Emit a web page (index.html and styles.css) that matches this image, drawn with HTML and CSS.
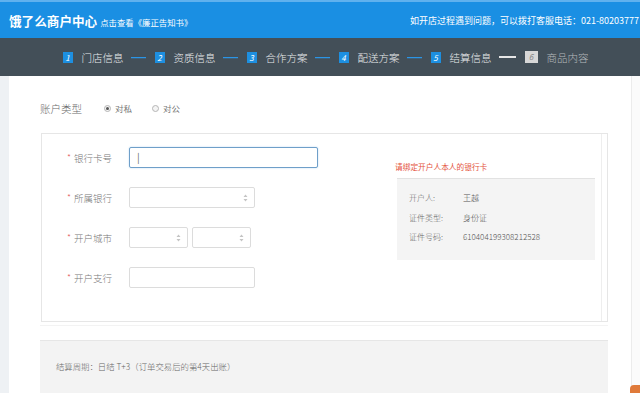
FILE: index.html
```html
<!DOCTYPE html>
<html lang="zh-CN">
<head>
<meta charset="utf-8">
<link rel="stylesheet" href="styles.css">
</head>
<body>
<header class="topbar">
  <div class="brand">
    <span class="logo">饿了么商户中心</span>
    <span class="notice">点击查看《廉正告知书》</span>
  </div>
  <div class="hotline">如开店过程遇到问题，可以拨打客服电话：021-80203777</div>
</header>
<nav class="steps">
  <span class="badge">1</span><span class="step-name">门店信息</span><span class="sep"></span>
  <span class="badge">2</span><span class="step-name">资质信息</span><span class="sep"></span>
  <span class="badge">3</span><span class="step-name">合作方案</span><span class="sep"></span>
  <span class="badge">4</span><span class="step-name">配送方案</span><span class="sep"></span>
  <span class="badge">5</span><span class="step-name">结算信息</span><span class="sep sep-off"></span>
  <span class="badge badge-off">6</span><span class="step-name step-off">商品内容</span>
</nav>
<div class="page">
  <div class="gutter"></div>
  <main class="content">
    <div class="acct-row">
      <span class="acct-label">账户类型</span>
      <label class="radio"><span class="dot dot-on"></span>对私</label>
      <label class="radio"><span class="dot"></span>对公</label>
    </div>
    <section class="formbox">
      <div class="fields">
        <div class="field">
          <span class="flabel"><i class="star">*</i>银行卡号</span>
          <div class="input input-wide input-focus"><span class="caret">|</span></div>
        </div>
        <div class="field">
          <span class="flabel"><i class="star">*</i>所属银行</span>
          <div class="select select-wide"><svg class="spin" width="5" height="8" viewBox="0 0 5 8"><path d="M2.5 0.5L4.5 3H0.5Z M2.5 7.5L4.5 5H0.5Z" fill="#c4c4c4"/></svg></div>
        </div>
        <div class="field">
          <span class="flabel"><i class="star">*</i>开户城市</span>
          <div class="select select-half"><svg class="spin" width="5" height="8" viewBox="0 0 5 8"><path d="M2.5 0.5L4.5 3H0.5Z M2.5 7.5L4.5 5H0.5Z" fill="#c4c4c4"/></svg></div>
          <div class="select select-half"><svg class="spin" width="5" height="8" viewBox="0 0 5 8"><path d="M2.5 0.5L4.5 3H0.5Z M2.5 7.5L4.5 5H0.5Z" fill="#c4c4c4"/></svg></div>
        </div>
        <div class="field">
          <span class="flabel"><i class="star">*</i>开户支行</span>
          <div class="input input-mid"></div>
        </div>
      </div>
      <aside class="info">
        <p class="warn">请绑定开户人本人的银行卡</p>
        <dl class="owner">
          <div class="orow"><dt>开户人:</dt><dd>王越</dd></div>
          <div class="orow"><dt>证件类型:</dt><dd>身份证</dd></div>
          <div class="orow"><dt>证件号码:</dt><dd>610404199308212528</dd></div>
        </dl>
      </aside>
    </section>
    <div class="spacer"></div>
    <section class="settle">结算周期：日结 T+3（订单交易后的第4天出账）</section>
  </main>
  <div class="rside"></div>
</div>
<div class="float-widget"></div>
</body>
</html>
```
FILE: styles.css
```css
* { box-sizing: border-box; margin: 0; padding: 0; }
html, body { height: 100%; }
body {
  font-family: "Noto Sans CJK SC", "Noto Sans", sans-serif;
  background: #fff;
  overflow: hidden;
  position: relative;
}
.topbar {
  height: 38px;
  background: #1a8fe3;
  border-top: 2px solid #5fb1ee;
  display: flex;
  align-items: center;
  justify-content: space-between;
  color: #fff;
  padding: 0 1px 0 9px;
}
.brand { display: flex; align-items: baseline; gap: 3px; }
.logo { font-size: 12.6px; font-weight: 700; letter-spacing: 0; }
.notice { font-size: 8.4px; }
.hotline { font-size: 9px; white-space: nowrap; }
.steps {
  height: 38px;
  background: #434f58;
  display: flex;
  align-items: center;
  justify-content: center;
  padding-left: 18px;
  color: #fff;
}
.badge {
  width: 10px; height: 11px;
  background: #1d8fe0;
  color: #fff;
  font-size: 8px;
  line-height: 11px;
  text-align: center;
  font-style: italic;
}
.badge-off {
  width: 13px; height: 12px; line-height: 12px;
  background: #d7d7d7; color: #888;
}
.step-name { font-size: 10.5px; margin-left: 9px; margin-right: 7px; color: #e8eaec; font-weight: 300; }
.step-off { color: #b4b8bb; }
.sep { width: 15px; height: 1px; background: #2b95e6; margin-right: 9px; box-shadow: 0 0.5px 0 rgba(43,149,230,0.5); }
.sep-off { width: 17px; height: 2px; background: #e6e6e6; box-shadow: none; }
.page { display: flex; height: calc(100% - 76px); }
.gutter { width: 9px; background: #eef1f4; flex: none; }
.content {
  width: 623px;
  flex: none;
  background: #fff;
  border-right: 1px solid #ececec;
  padding: 20px 23px 0 31px;
}
.rside { flex: 1; background: #fbfbfb; }
.acct-row {
  height: 24px;
  display: flex;
  align-items: center;
  margin-bottom: 13px;
  color: #666;
}
.acct-label { font-size: 10.5px; width: 64px; color: #6a6a6a; font-weight: 300; }
.radio { display: flex; align-items: center; font-size: 8.5px; color: #777; margin-right: 20px; }
.dot {
  width: 7px; height: 7px;
  border: 1px solid #b5b5b5;
  border-radius: 50%;
  margin-right: 4px;
  position: relative;
  background: #f4f4f4;
}
.dot-on::after {
  content: ""; position: absolute;
  left: 1px; top: 1px; width: 3px; height: 3px;
  border-radius: 50%; background: #555;
}
.formbox {
  height: 189px;
  border: 1px solid #e6e6e6;
  box-shadow: inset -5px 0 0 #fff, inset -6px 0 0 #eeeeee;
  display: flex;
  justify-content: space-between;
  padding-left: 25px;
  margin-left: 1px;
}
.fields { padding-top: 13px; }
.field {
  height: 21px;
  display: flex;
  align-items: center;
  margin-bottom: 19px;
}
.flabel { width: 62px; font-size: 9.5px; color: #777; display: flex; align-items: center; font-weight: 300; }
.star { font-style: normal; color: #e45c5c; font-size: 9px; margin-right: 3px; }
.input, .select {
  height: 21px;
  border: 1px solid #dcdcdc;
  border-radius: 2px;
  background: #fff;
  position: relative;
}
.input-wide { width: 189px; }
.input-mid { width: 126px; }
.input-focus {
  border-color: #6f9fc9;
  box-shadow: 0 0 2px #b9daf3;
}
.caret { position: absolute; left: 7px; top: 3px; font-size: 10px; line-height: 12px; color: #666; }
.select-wide { width: 126px; }
.select-half { width: 59px; margin-right: 4px; }
.spin { position: absolute; right: 6px; top: 6px; }
.info { width: 198px; margin-right: 12px; padding-top: 27px; }
.warn { font-size: 7.7px; line-height: 12px; color: #e4533d; margin-left: -2px; margin-bottom: 5px; }
.owner {
  height: 82px;
  background: #f4f4f4;
  border-top: 1px solid #e2e2e2;
  padding: 9px 0 0 12px;
}
.orow { display: flex; height: 19.5px; align-items: center; font-size: 8px; color: #666; font-weight: 300; }
.orow dt { width: 54px; }
.orow dd { color: #555; }
.spacer { height: 18px; border-top: 1px solid #f3f3f3; margin-top: 3px; }
.settle {
  height: 60px;
  background: #f3f3f3;
  border-top: 1px solid #e6e6e6;
  margin-top: -3px;
  padding: 19px 0 0 16px;
  font-size: 8.4px;
  line-height: 12px;
  color: #666;
  font-weight: 300;
}
.float-widget {
  position: absolute;
  right: -4px; bottom: -4px;
  width: 14px; height: 12px;
  border-radius: 4px;
  background: #e07a3a;
}
```
